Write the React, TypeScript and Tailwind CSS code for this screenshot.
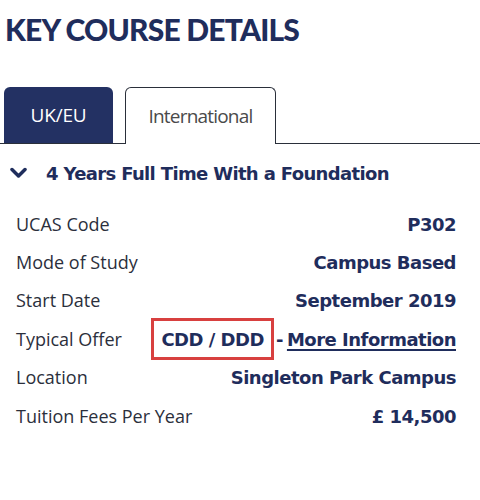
import React from "react";

const rows: { label: string; value: React.ReactNode }[] = [
  { label: "UCAS Code", value: "P302" },
  { label: "Mode of Study", value: "Campus Based" },
  { label: "Start Date", value: "September 2019" },
  {
    label: "Typical Offer",
    value: (
      <span className="flex items-center">
        <span className="border-[3px] border-[#d8403f] px-[7px] h-[42px] flex items-center">CDD / DDD</span>
        <span className="ml-[2px] mr-[4px]">-</span>
        <span className="underline underline-offset-[3px] decoration-[2px]">More Information</span>
      </span>
    ),
  },
  { label: "Location", value: "Singleton Park Campus" },
  { label: "Tuition Fees Per Year", value: "£ 14,500" },
];

export default function App() {
  return (
    <div className="w-[480px] h-[500px] bg-white overflow-hidden">
      <h1 className="pl-[5px] pt-[14px] text-[30px] leading-[30px] font-black text-[#1f2d5c] tracking-[-0.8px] font-['Lato',sans-serif]">
        KEY COURSE DETAILS
      </h1>
      <div className="mt-[43px] flex items-end border-b border-[#2a2f3a] pl-[4px] gap-[12px] h-[57px]">
        <div className="w-[109px] h-[56px] bg-[#233163] rounded-t-[6px] flex items-center justify-center text-white text-[19px] font-['Open_Sans',sans-serif] tracking-[-0.2px]">
          UK/EU
        </div>
        <div className="w-[151px] h-[57px] -mb-px bg-white border border-b-0 border-[#2a2f3a] rounded-t-[6px] flex items-center justify-center text-[#4a4a4a] text-[19px] font-['Open_Sans',sans-serif] tracking-[-0.8px]">
          International
        </div>
      </div>
      <div className="flex items-center mt-[16px] pl-[10px] h-[26px]">
        <svg width="17" height="12" viewBox="0 0 17 12" className="mr-[19px]">
          <path d="M2 2.5 L8.5 9 L15 2.5" stroke="#1f2d5c" strokeWidth="3.5" fill="none" strokeLinecap="round" strokeLinejoin="round" />
        </svg>
        <span className="text-[18px] font-bold text-[#1f2d5c] font-['DejaVu_Sans',sans-serif] tracking-[-0.65px]">4 Years Full Time With a Foundation</span>
      </div>
      <div className="mt-[19px] pl-[16px] pr-[24px] flex flex-col">
        {rows.map((r) => (
          <div key={r.label} className="flex items-center justify-between h-[38.4px]">
            <span className="text-[18px] text-[#2b2f3c] font-['Open_Sans',sans-serif]">{r.label}</span>
            <span className="text-[18px] font-bold text-[#1f2d5c] font-['DejaVu_Sans',sans-serif] tracking-[-0.5px]">{r.value}</span>
          </div>
        ))}
      </div>
    </div>
  );
}
